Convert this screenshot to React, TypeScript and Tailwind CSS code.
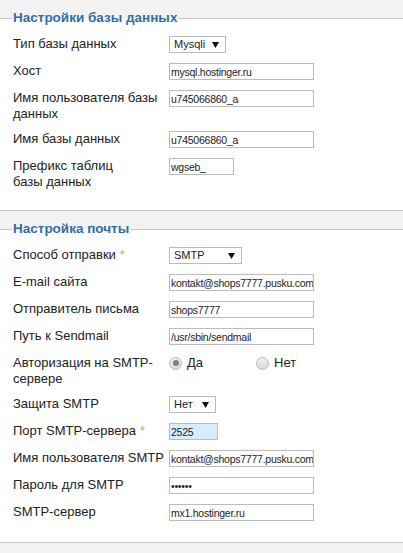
import type { ReactNode } from 'react';

const FONT = { fontFamily: '"Liberation Sans", Arial, sans-serif' };

function Row({ label, req, children }: { label: ReactNode; req?: boolean; children: ReactNode }) {
  return (
    <div className="flex items-start pl-[13px] mb-[10px]">
      <div className="w-[156px] shrink-0 text-[13px] leading-[15.5px] text-[#222] whitespace-nowrap">
        {label}
        {req && <span className="text-[#f0a030] ml-[4px]">*</span>}
      </div>
      {children}
    </div>
  );
}

function Field({ value, w, type = 'text', blue }: { value: string; w: string; type?: string; blue?: boolean }) {
  return (
    <input
      type={type}
      value={value}
      readOnly
      className={`${w} h-[17px] border border-[#bbbbbb] pl-[1px] pr-0 text-[10.5px] tracking-[-0.25px] text-[#222] outline-none ${
        blue ? 'bg-[#d9ecff]' : 'bg-white'
      }`}
      style={FONT}
    />
  );
}

function Select({ value, w }: { value: string; w: string }) {
  return (
    <div className={`${w} h-[17px] border border-[#bbbbbb] bg-white flex items-center justify-between pl-[4px] pr-[6px] text-[11px] text-[#222]`}>
      <span>{value}</span>
      <svg width="7" height="6" viewBox="0 0 7 6">
        <path d="M0 0h7L3.5 6z" fill="#111" />
      </svg>
    </div>
  );
}

function Radio({ checked, label }: { checked?: boolean; label: string }) {
  return (
    <div className="flex items-center gap-[5px] w-[87px]">
      <span className="w-[13px] h-[13px] rounded-full border border-[#b8b8b8] bg-gradient-to-b from-[#f0f0f0] to-[#dadada] flex items-center justify-center">
        {checked && <span className="w-[6px] h-[6px] rounded-full bg-[#808080]" />}
      </span>
      <span className="text-[13px] text-[#222]">{label}</span>
    </div>
  );
}

function Section({ title, children, className = '' }: { title: string; children: ReactNode; className?: string }) {
  return (
    <fieldset className={`border-y border-[#c8c8c8] bg-white pt-[10px] pb-[11px] ${className}`}>
      <legend className="ml-[12px] px-[1px] text-[13.5px] leading-[16px] font-bold text-[#2d6eaa]">{title}</legend>
      {children}
    </fieldset>
  );
}

export default function App() {
  return (
    <div className="min-h-[553px] bg-[#f2f2f2] pt-[10px]" style={FONT}>
      <Section title="Настройки базы данных">
        <Row label="Тип базы данных">
          <Select value="Mysqli" w="w-[57px]" />
        </Row>
        <Row label="Хост">
          <Field value="mysql.hostinger.ru" w="w-[145px]" />
        </Row>
        <Row label={<>Имя пользователя базы<br />данных</>}>
          <Field value="u745066860_a" w="w-[145px]" />
        </Row>
        <Row label="Имя базы данных">
          <Field value="u745066860_a" w="w-[145px]" />
        </Row>
        <Row label={<>Префикс таблиц<br />базы данных</>}>
          <Field value="wgseb_" w="w-[65px]" />
        </Row>
      </Section>

      <Section title="Настройка почты" className="mt-[10px]">
        <Row label="Способ отправки" req>
          <Select value="SMTP" w="w-[73px]" />
        </Row>
        <Row label="E-mail сайта">
          <Field value="kontakt@shops7777.pusku.com" w="w-[145px]" />
        </Row>
        <Row label="Отправитель письма">
          <Field value="shops7777" w="w-[145px]" />
        </Row>
        <Row label="Путь к Sendmail">
          <Field value="/usr/sbin/sendmail" w="w-[145px]" />
        </Row>
        <Row label={<>Авторизация на SMTP-<br />сервере</>}>
          <div className="flex items-center h-[16px]">
            <Radio checked label="Да" />
            <Radio label="Нет" />
          </div>
        </Row>
        <Row label="Защита SMTP">
          <Select value="Нет" w="w-[47px]" />
        </Row>
        <Row label="Порт SMTP-сервера" req>
          <Field value="2525" w="w-[49px]" blue />
        </Row>
        <Row label="Имя пользователя SMTP">
          <Field value="kontakt@shops7777.pusku.com" w="w-[145px]" />
        </Row>
        <Row label="Пароль для SMTP">
          <Field value="123456" w="w-[145px]" type="password" />
        </Row>
        <Row label="SMTP-сервер">
          <Field value="mx1.hostinger.ru" w="w-[145px]" />
        </Row>
      </Section>
    </div>
  );
}
